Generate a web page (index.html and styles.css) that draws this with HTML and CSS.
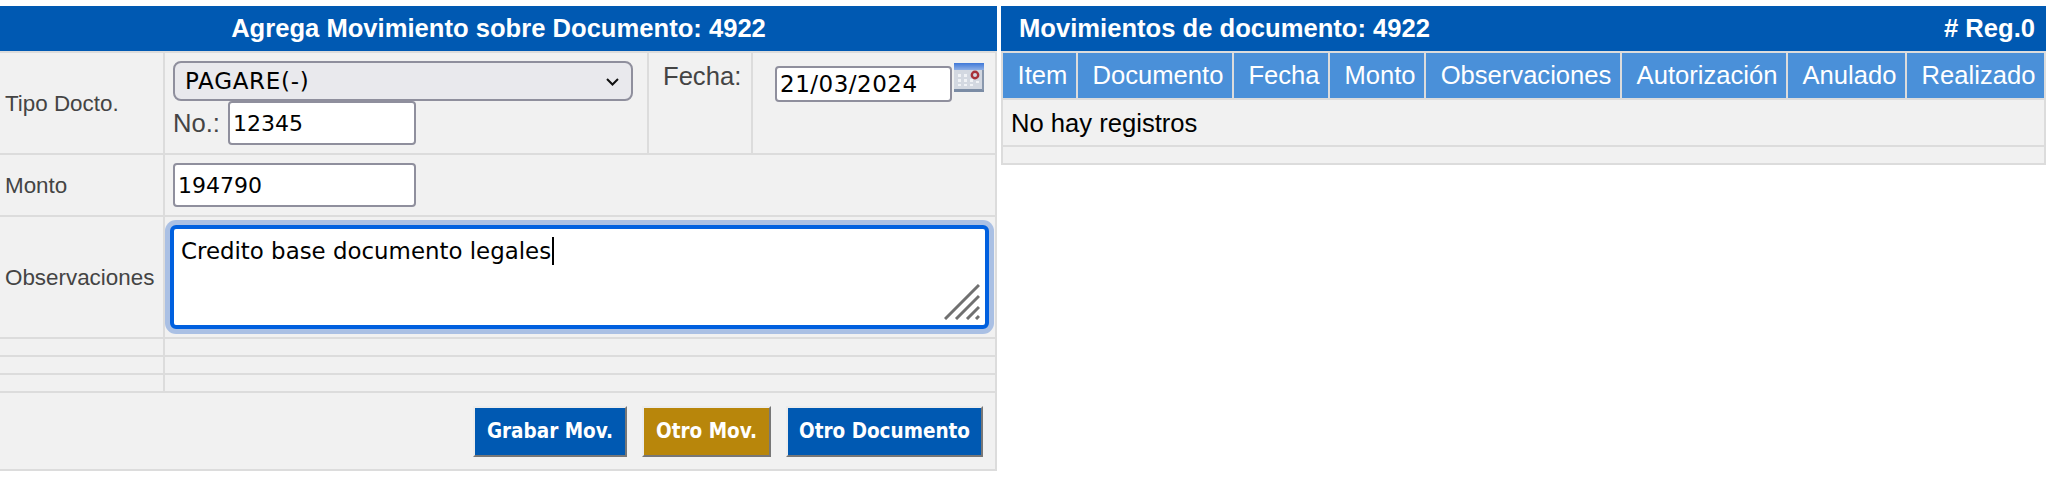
FILE: index.html
```html
<!DOCTYPE html>
<html lang="es">
<head>
    <meta charset="UTF-8">
    <title>Movimientos de documento</title>
    <link rel="stylesheet" href="styles.css">
</head>
<body>
    <div class="page">
        <div class="panel panel-form">
            <div class="title title-center">Agrega Movimiento sobre Documento: 4922</div>
            <table class="form-table">
                <colgroup>
                    <col class="col-label">
                    <col class="col-main">
                    <col class="col-fecha">
                    <col class="col-date">
                </colgroup>
                <tr class="row-tipo">
                    <td class="label">Tipo Docto.</td>
                    <td class="top">
                        <select class="select">
                            <option>PAGARE(-)</option>
                        </select>
                        <div class="no-line">
                            <span class="no-label">No.:</span>
                            <input class="input input-no" type="text" value="12345">
                        </div>
                    </td>
                    <td class="top fecha-label">Fecha:</td>
                    <td class="top">
                        <div class="date-line">
                            <input class="input input-date" type="text" value="21/03/2024">
                            <!-- calendar icon -->
                            <svg class="cal-icon" width="30" height="29" viewBox="0 0 30 29">
                                <defs>
                                    <linearGradient id="calTop" x1="0" y1="0" x2="0" y2="1">
                                        <stop offset="0" stop-color="#3f78d8"/>
                                        <stop offset="1" stop-color="#8fb0e6"/>
                                    </linearGradient>
                                </defs>
                                <rect x="0" y="0" width="30" height="29" fill="#d3d8e1"/>
                                <rect x="0" y="0" width="30" height="7" fill="url(#calTop)"/>
                                <path d="M4 11h3v3H4zM10 11h3v3h-3zM4 16h3v3H4zM10 16h3v3h-3zM16 16h3v3h-3zM22 18h3v2h-3zM4 21h3v2H4zM10 21h3v2h-3zM16 21h3v2h-3z" fill="#f0f2f6"/>
                                <circle cx="21" cy="12" r="3.2" fill="none" stroke="#a8323a" stroke-width="2.4"/>
                                <rect x="0" y="26" width="30" height="3" fill="#7b8ca5"/>
                                <rect x="28" y="7" width="2" height="20" fill="#8a98ad"/>
                            </svg>
                        </div>
                    </td>
                </tr>
                <tr class="row-monto">
                    <td class="label">Monto</td>
                    <td class="top" colspan="3">
                        <input class="input input-monto" type="text" value="194790">
                    </td>
                </tr>
                <tr class="row-obs">
                    <td class="label">Observaciones</td>
                    <td class="top obs-cell" colspan="3">
                        <div class="obs-box">
                            Credito base documento legales<span class="caret"></span>
                            <!-- resize handle -->
                            <svg class="grip" width="36" height="36" viewBox="0 0 36 36">
                                <path d="M1 35L35 1M12 35L35 12M23 35L35 23M32 35L35 32" stroke="#707070" stroke-width="3" fill="none"/>
                            </svg>
                        </div>
                    </td>
                </tr>
                <tr class="row-empty"><td></td><td colspan="3"></td></tr>
                <tr class="row-empty"><td></td><td colspan="3"></td></tr>
                <tr class="row-empty"><td></td><td colspan="3"></td></tr>
                <tr class="row-actions">
                    <td colspan="4">
                        <div class="actions">
                            <button class="btn btn-grabar">Grabar Mov.</button>
                            <button class="btn btn-gold">Otro Mov.</button>
                            <button class="btn btn-doc">Otro Documento</button>
                        </div>
                    </td>
                </tr>
            </table>
        </div>

        <div class="panel panel-list">
            <div class="title title-split">
                <span>Movimientos de documento: 4922</span>
                <span># Reg.0</span>
            </div>
            <table class="list-table">
                <colgroup>
                    <col class="c-item">
                    <col class="c-doc">
                    <col class="c-fecha">
                    <col class="c-monto">
                    <col class="c-obs">
                    <col class="c-aut">
                    <col class="c-anul">
                    <col class="c-real">
                </colgroup>
                <tr>
                    <th>Item</th>
                    <th>Documento</th>
                    <th>Fecha</th>
                    <th>Monto</th>
                    <th>Observaciones</th>
                    <th>Autorización</th>
                    <th>Anulado</th>
                    <th>Realizado</th>
                </tr>
                <tr class="row-msg"><td colspan="8">No hay registros</td></tr>
                <tr class="row-empty"><td colspan="8"></td></tr>
            </table>
        </div>
    </div>
</body>
</html>
```

FILE: styles.css
```css
* {
    box-sizing: border-box;
}
body {
    margin: 0;
    background: white;
    font-family: "Liberation Sans", Arial, sans-serif;
}
.page {
    display: flex;
    gap: 4px;
    padding-top: 6px;
}
.panel-form {
    width: 997px;
}
.panel-list {
    width: 1045px;
}
.title {
    height: 45px;
    background: #0059b2;
    color: white;
    font-size: 25.6px;
    font-weight: bold;
    line-height: 45px;
}
.title-center {
    text-align: center;
}
.title-split {
    display: flex;
    justify-content: space-between;
    padding: 0 11px 0 18px;
}

/* tables */
table {
    table-layout: fixed;
    border-collapse: separate;
    border-spacing: 0;
    background: #f1f1f1;
    border-top: 2px solid #dcdcdc;
}
td, th {
    padding: 0;
    border-right: 2px solid #dcdcdc;
    border-bottom: 2px solid #dcdcdc;
}
.form-table {
    width: 997px;
}
.col-label { width: 165px; }
.col-main { width: 484px; }
.col-fecha { width: 104px; }
.col-date { width: 244px; }
.row-tipo td { height: 102px; }
.row-monto td { height: 62px; }
.row-obs td { height: 122px; }
.row-empty td { height: 18px; }
.row-actions td { height: 78px; }
.label {
    padding: 2px 0 0 5px;
    font-size: 22.4px;
    color: #444;
}
.top {
    vertical-align: top;
    padding: 8px 0 0 8px;
}

/* form controls */
.select {
    display: block;
    width: 460px;
    height: 40px;
    padding: 0 10px;
    border: 2px solid #8f8f9d;
    border-radius: 8px;
    appearance: none;
    background: #e9e9ed url("data:image/svg+xml,%3Csvg xmlns='http://www.w3.org/2000/svg' width='13' height='8'%3E%3Cpath d='M1 1l5.5 5.5L12 1' fill='none' stroke='%23111' stroke-width='2'/%3E%3C/svg%3E") no-repeat 431px 15px;
    color: black;
    font-family: "DejaVu Sans", sans-serif;
    font-size: 23px;
    letter-spacing: 0.7px;
}
.input {
    height: 44px;
    padding: 0 3px;
    border: 2px solid #8f8f9d;
    border-radius: 4px;
    background: white;
    color: black;
    font-family: "DejaVu Sans", sans-serif;
    font-size: 22px;
}
.no-line {
    display: flex;
    align-items: center;
}
.no-label {
    width: 55px;
    font-size: 25.6px;
    color: #444;
}
.input-no {
    width: 188px;
}
.input-monto {
    width: 243px;
}
.fecha-label {
    padding: 9px 0 0 14px;
    font-size: 25.6px;
    color: #444;
}
.date-line {
    display: flex;
    gap: 2px;
    align-items: flex-start;
    padding: 2px 0 0 14px;
}
.input-date {
    width: 177px;
    height: 36px;
    margin-top: 3px;
    font-size: 23px;
    letter-spacing: 0.5px;
}
.obs-cell {
    padding-left: 5px;
}
.obs-box {
    position: relative;
    width: 819px;
    height: 104px;
    padding: 8px 7px;
    border: 4px solid #0060df;
    border-radius: 6px;
    background: white;
    box-shadow: 0 0 0 5px #aac0e4;
    color: black;
    font-family: "DejaVu Sans", sans-serif;
    font-size: 22.9px;
}
.caret {
    display: inline-block;
    width: 2px;
    height: 28px;
    margin-left: 1px;
    vertical-align: -6px;
    background: black;
}
.grip {
    position: absolute;
    right: 5px;
    bottom: 5px;
}

/* buttons */
.actions {
    display: flex;
    justify-content: flex-end;
    gap: 15px;
    padding-right: 12px;
}
.btn {
    height: 51px;
    padding: 0;
    border: 2px solid #ececec;
    border-right-color: #777;
    border-bottom-color: #777;
    background: #0059b2;
    color: white;
    font-family: "DejaVu Sans Condensed", "DejaVu Sans", sans-serif;
    font-stretch: condensed;
    font-size: 20.5px;
    font-weight: bold;
}
.btn-grabar {
    width: 154px;
}
.btn-gold {
    width: 129px;
    background: #b8860b;
}
.btn-doc {
    width: 197px;
}

/* list */
.list-table {
    width: 1045px;
    border-left: 2px solid #dcdcdc;
}
.c-item { width: 75px; }
.c-doc { width: 156px; }
.c-fecha { width: 96px; }
.c-monto { width: 96px; }
.c-obs { width: 196px; }
.c-aut { width: 166px; }
.c-anul { width: 119px; }
.c-real { width: 139px; }
th {
    height: 47px;
    padding: 0 7px 0 13px;
    background: #4a90d9;
    background-clip: padding-box;
    color: white;
    font-size: 25.6px;
    font-weight: normal;
    white-space: nowrap;
}
.row-msg td {
    height: 47px;
    padding: 2px 0 0 8px;
    font-size: 25.6px;
    color: black;
}
```
